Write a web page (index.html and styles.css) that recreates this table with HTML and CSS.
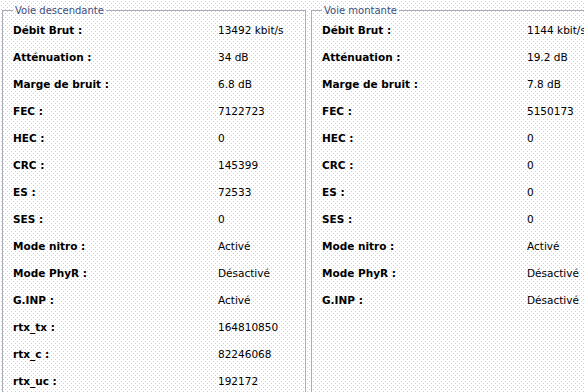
FILE: index.html
```html
<!DOCTYPE html>
<html lang="fr">
<head>
    <meta charset="UTF-8">
    <title>Statistiques ADSL</title>
    <link rel="stylesheet" href="styles.css">
</head>
<body>
    <div class="panels">
        <fieldset class="panel">
            <legend>Voie descendante</legend>
            <div class="row"><span class="label">Débit Brut :</span><span class="value">13492 kbit/s</span></div>
            <div class="row"><span class="label">Atténuation :</span><span class="value">34 dB</span></div>
            <div class="row"><span class="label">Marge de bruit :</span><span class="value">6.8 dB</span></div>
            <div class="row"><span class="label">FEC :</span><span class="value">7122723</span></div>
            <div class="row"><span class="label">HEC :</span><span class="value">0</span></div>
            <div class="row"><span class="label">CRC :</span><span class="value">145399</span></div>
            <div class="row"><span class="label">ES :</span><span class="value">72533</span></div>
            <div class="row"><span class="label">SES :</span><span class="value">0</span></div>
            <div class="row"><span class="label">Mode nitro :</span><span class="value">Activé</span></div>
            <div class="row"><span class="label">Mode PhyR :</span><span class="value">Désactivé</span></div>
            <div class="row"><span class="label">G.INP :</span><span class="value">Activé</span></div>
            <div class="row"><span class="label">rtx_tx :</span><span class="value">164810850</span></div>
            <div class="row"><span class="label">rtx_c :</span><span class="value">82246068</span></div>
            <div class="row"><span class="label">rtx_uc :</span><span class="value">192172</span></div>
        </fieldset>

        <fieldset class="panel">
            <legend>Voie montante</legend>
            <div class="row"><span class="label">Débit Brut :</span><span class="value">1144 kbit/s</span></div>
            <div class="row"><span class="label">Atténuation :</span><span class="value">19.2 dB</span></div>
            <div class="row"><span class="label">Marge de bruit :</span><span class="value">7.8 dB</span></div>
            <div class="row"><span class="label">FEC :</span><span class="value">5150173</span></div>
            <div class="row"><span class="label">HEC :</span><span class="value">0</span></div>
            <div class="row"><span class="label">CRC :</span><span class="value">0</span></div>
            <div class="row"><span class="label">ES :</span><span class="value">0</span></div>
            <div class="row"><span class="label">SES :</span><span class="value">0</span></div>
            <div class="row"><span class="label">Mode nitro :</span><span class="value">Activé</span></div>
            <div class="row"><span class="label">Mode PhyR :</span><span class="value">Désactivé</span></div>
            <div class="row"><span class="label">G.INP :</span><span class="value">Désactivé</span></div>
        </fieldset>
    </div>
</body>
</html>
```

FILE: styles.css
```css
html {
    overflow: hidden;
    background-color: #fff;
    background-image:
        linear-gradient(to right, #fff 1px, transparent 1px),
        linear-gradient(#fff 1px, transparent 1px),
        radial-gradient(circle at 1.5px 1.5px, #eadf3e 1px, transparent 1.1px),
        radial-gradient(circle at 3.5px 3.5px, #eadf3e 1px, transparent 1.1px);
    background-size: 2px 2px, 2px 2px, 4px 4px, 4px 4px;
}
body {
    margin: 0;
    font-family: "DejaVu Sans", Verdana, sans-serif;
    font-size: 10.5px;
    color: #000;
}
.panels {
    display: flex;
    gap: 5px;
    padding: 4px 2px 0;
}
.panel {
    flex: 0 0 304px;
    box-sizing: border-box;
    min-width: 0;
    margin: 0;
    padding: 0 0 12px 10px;
    border: 1px solid #aaacba;
}
.panel legend {
    padding: 0 2px;
    font-size: 10px;
    line-height: 13px;
    color: #3d4f7c;
}
.row {
    display: grid;
    grid-template-columns: 205px auto;
    height: 27px;
    line-height: 27px;
    white-space: nowrap;
}
.label {
    font-weight: bold;
}
```
